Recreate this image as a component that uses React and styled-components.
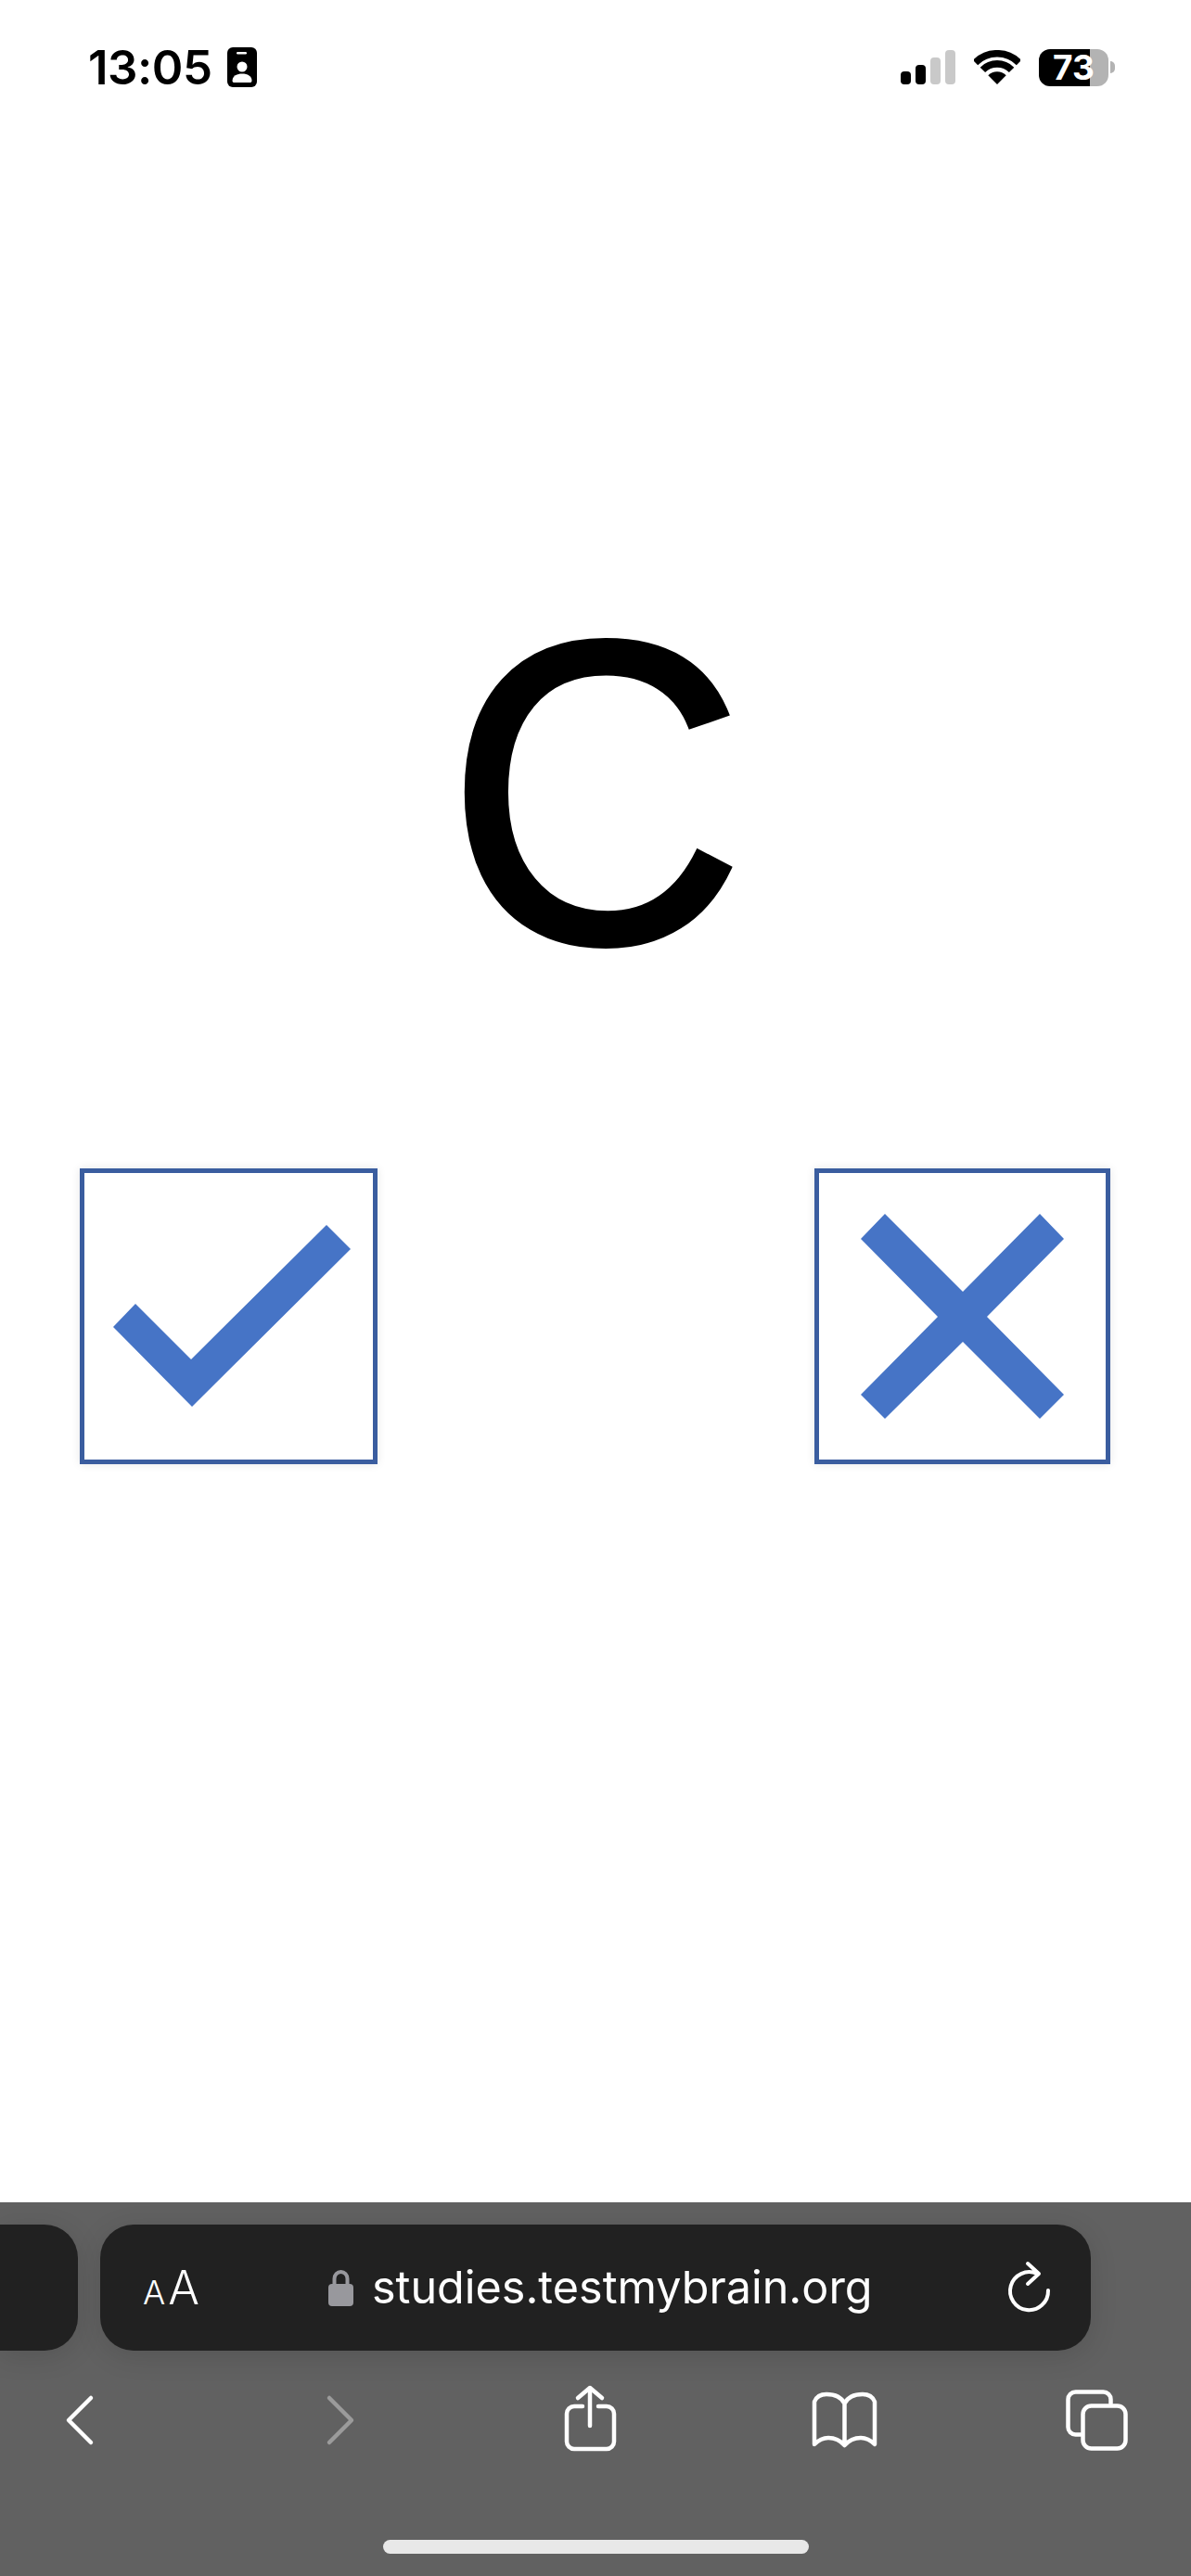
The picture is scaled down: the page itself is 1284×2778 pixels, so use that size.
import React from 'react';
import styled, { createGlobalStyle } from 'styled-components';

const GlobalStyle = createGlobalStyle`
  html, body {
    margin: 0;
    padding: 0;
    background: #fff;
  }
`;

const Page = styled.div`
  width: 1284px;
  height: 2778px;
  display: flex;
  flex-direction: column;
  overflow: hidden;
  font-family: Inter, 'Liberation Sans', sans-serif;
`;

const StatusBar = styled.header`
  height: 145px;
  flex: none;
  display: flex;
  align-items: center;
  justify-content: space-between;
  padding: 0 82px 0 95px;
`;

const StatusGroup = styled.div`
  display: flex;
  align-items: center;
  gap: ${({ $gap }) => $gap}px;
`;

const Time = styled.span`
  font-size: 51px;
  font-weight: 600;
  line-height: 1;
  color: #000;
  letter-spacing: -0.5px;
`;

const Signal = styled.div`
  display: flex;
  align-items: flex-end;
  gap: 5px;
  height: 37px;
`;

const SignalBar = styled.span`
  width: 11px;
  height: ${({ $h }) => $h}px;
  border-radius: 4px;
  background: ${({ $off }) => ($off ? '#c9c9c9' : '#000')};
`;

const Battery = styled.div`
  display: flex;
  align-items: center;
`;

const BatteryBody = styled.div`
  width: 75px;
  height: 40px;
  border-radius: 12px;
  display: flex;
  align-items: center;
  justify-content: center;
  background: linear-gradient(90deg, #000 73%, #b3b3b3 73%);
  color: #fff;
  font-size: 37px;
  font-weight: 700;
  line-height: 1;
`;

const BatteryNub = styled.span`
  width: 5px;
  height: 13px;
  margin-left: 2px;
  border-radius: 0 7px 7px 0;
  background: #b3b3b3;
`;

const Main = styled.main`
  flex: 1;
  display: flex;
  flex-direction: column;
  padding-top: 477px;
`;

const Letter = styled.div`
  font-family: 'Liberation Sans', Arial, sans-serif;
  font-size: 466px;
  line-height: 466px;
  color: #000;
  text-align: center;
  -webkit-text-stroke: 5px #000;
  transform: scaleX(0.96);
`;

const Answers = styled.div`
  margin-top: 172px;
  display: flex;
  justify-content: space-between;
  padding: 0 87px 0 86px;
`;

const AnswerBox = styled.button`
  width: ${({ $w }) => $w}px;
  height: 319px;
  padding: 0;
  box-sizing: border-box;
  border: 5px solid #3a5d9f;
  background: #fff;
  box-shadow: 0 0 9px rgba(0, 0, 0, 0.1);
  filter: blur(0.5px);
  svg {
    display: block;
  }
`;

const Toolbar = styled.footer`
  height: 403px;
  flex: none;
  box-sizing: border-box;
  padding-top: 24px;
  background: #616161;
  display: flex;
  flex-direction: column;
`;

const TabRow = styled.div`
  display: flex;
  gap: 24px;
  height: 136px;
  flex: none;
`;

const TabStub = styled.div`
  width: 84px;
  border-radius: 0 36px 36px 0;
  background: #212121;
  box-shadow: 0 6px 30px rgba(0, 0, 0, 0.12);
`;

const AddressPill = styled.div`
  width: 1068px;
  box-sizing: border-box;
  padding: 0 40px 0 46px;
  border-radius: 36px;
  background: #212121;
  box-shadow: 0 6px 30px rgba(0, 0, 0, 0.12);
  display: flex;
  align-items: center;
  color: #fff;
`;

const TextSize = styled.span`
  display: flex;
  align-items: baseline;
  gap: 3px;
  font-family: Inter, sans-serif;
  font-weight: 300;
  line-height: 1;
`;

const SizeLetter = styled.span`
  font-size: ${({ $size }) => $size}px;
`;

const Url = styled.div`
  margin-left: 139px;
  display: flex;
  align-items: center;
  gap: 20px;
`;

const UrlText = styled.span`
  font-size: 48.500px;
  font-weight: 400;
  line-height: 1;
  white-space: nowrap;
`;

const Reload = styled.svg`
  margin-left: auto;
  flex: none;
`;

const LockIcon = styled.svg`
  flex: none;
`;

const IconRow = styled.nav`
  display: flex;
  align-items: flex-start;
  height: 80px;
  margin-top: 35px;
  flex: none;
`;

const ToolIcon = styled.svg`
  display: block;
  flex: none;
  height: 80px;
  margin-left: ${({ $left }) => $left}px;
  fill: none;
  stroke: ${({ $dim }) => ($dim ? '#9b9b9b' : '#fff')};
  stroke-width: 4.500;
  stroke-linecap: round;
  stroke-linejoin: round;
`;

const HomeIndicator = styled.div`
  width: 459px;
  height: 15px;
  margin: 89px 0 0 413px;
  border-radius: 8px;
  background: #e8e8e8;
  flex: none;
`;

const BadgeIcon = () => (
  <svg width="32" height="43" viewBox="0 0 32 43">
    <rect width="32" height="43" rx="6" fill="#000" />
    <rect x="10" y="5" width="11" height="2.5" rx="1.2" fill="#fff" />
    <circle cx="16" cy="21" r="5.5" fill="#fff" />
    <path d="M5.5 36 C5.5 31 10 28.5 16 28.5 C22 28.5 26.5 31 26.5 36 C26.5 37.5 25.5 38 24.5 38 H7.5 C6.5 38 5.5 37.5 5.5 36 Z" fill="#fff" />
  </svg>
);

const WifiIcon = () => (
  <svg width="50" height="37" viewBox="0 0 50 37">
    <path d="M1.5 13.5 A33.2 33.2 0 0 1 48.5 13.5" fill="none" stroke="#000" strokeWidth="7.6" />
    <path d="M9.4 21.4 A22 22 0 0 1 40.6 21.4" fill="none" stroke="#000" strokeWidth="7.6" />
    <path d="M25 37 L15.3 27.3 A13.7 13.7 0 0 1 34.7 27.3 Z" fill="#000" />
  </svg>
);

const App = () => (
  <>
    <GlobalStyle />
    <Page>
      <StatusBar>
        <StatusGroup $gap={16}>
          <Time>13:05</Time>
          <BadgeIcon />
        </StatusGroup>
        <StatusGroup $gap={20}>
          <Signal>
            <SignalBar $h={14} />
            <SignalBar $h={21} />
            <SignalBar $h={29} $off />
            <SignalBar $h={37} $off />
          </Signal>
          <WifiIcon />
          <Battery>
            <BatteryBody>73</BatteryBody>
            <BatteryNub />
          </Battery>
        </StatusGroup>
      </StatusBar>

      <Main>
        <Letter>C</Letter>
        <Answers>
          <AnswerBox $w={321} aria-label="yes">
            <svg width="311" height="309" viewBox="1 1 311 309">
              <path d="M32 167 L56 142 L116 202 L262 57 L288 83 L117 253 Z" fill="#4674c6" />
            </svg>
          </AnswerBox>
          <AnswerBox $w={319} aria-label="no">
            <svg width="309" height="309" viewBox="2 1 309 309">
              <path d="M47 72 L73 45 L157 129 L240 45 L266 72 L183 156 L266 240 L240 266 L157 183 L73 266 L47 240 L130 156 Z" fill="#4674c6" />
            </svg>
          </AnswerBox>
        </Answers>
      </Main>

      <Toolbar>
        <TabRow>
          <TabStub />
          <AddressPill>
            <TextSize>
              <SizeLetter $size={36}>A</SizeLetter>
              <SizeLetter $size={50}>A</SizeLetter>
            </TextSize>
            <Url>
              <LockIcon width="27" height="40" viewBox="0 0 27 40">
                <path d="M6.500 18 V10.500 a7 7.500 0 0 1 14 0 V18" fill="none" stroke="#98989d" strokeWidth="4" />
                <rect y="16" width="27" height="24" rx="4" fill="#98989d" />
              </LockIcon>
              <UrlText>studies.testmybrain.org</UrlText>
            </Url>
            <Reload width="52" height="62" viewBox="0 0 52 62">
              <path d="M46 34 A20.500 20.500 0 1 1 34 16 M24 5 L36 16 L24 27" fill="none" stroke="#fff" strokeWidth="4" strokeLinecap="round" strokeLinejoin="round" />
            </Reload>
          </AddressPill>
        </TabRow>

        <IconRow>
          <ToolIcon $left={68} width="36" viewBox="0 0 36 80">
            <path d="M30 16 L6 40 L30 64" />
          </ToolIcon>
          <ToolIcon $left={245} $dim width="36" viewBox="0 0 36 80">
            <path d="M6 16 L30 40 L6 64" />
          </ToolIcon>
          <ToolIcon $left={221} width="60" viewBox="0 0 60 80">
            <path d="M30 5 V46 M17 16 L30 5 L43 16" />
            <path d="M22 25 H13 a8 8 0 0 0 -8 8 V63 a8 8 0 0 0 8 8 H48 a8 8 0 0 0 8 -8 V33 a8 8 0 0 0 -8 -8 H39" />
          </ToolIcon>
          <ToolIcon $left={205} width="80" viewBox="0 0 80 80">
            <path d="M39.500 22 V67 M39.500 22 C36 15 28 12 20 12 C14 12 9 15 7 20 V66 C12 61 18 59 22 59 C29 59 35 62 39.500 67 C44 62 50 59 57 59 C61 59 67 61 72 66 V20 C70 15 65 12 59 12 C51 12 43 15 39.500 22 Z" />
          </ToolIcon>
          <ToolIcon $left={195} width="73" viewBox="0 0 73 80">
            <path d="M51.500 22 V17.500 a8 8 0 0 0 -8 -8 H13.500 a8 8 0 0 0 -8 8 V47.500 a8 8 0 0 0 8 8 H19" />
            <rect x="21.500" y="24.500" width="46" height="46" rx="9" />
          </ToolIcon>
        </IconRow>

        <HomeIndicator />
      </Toolbar>
    </Page>
  </>
);

export default App;
